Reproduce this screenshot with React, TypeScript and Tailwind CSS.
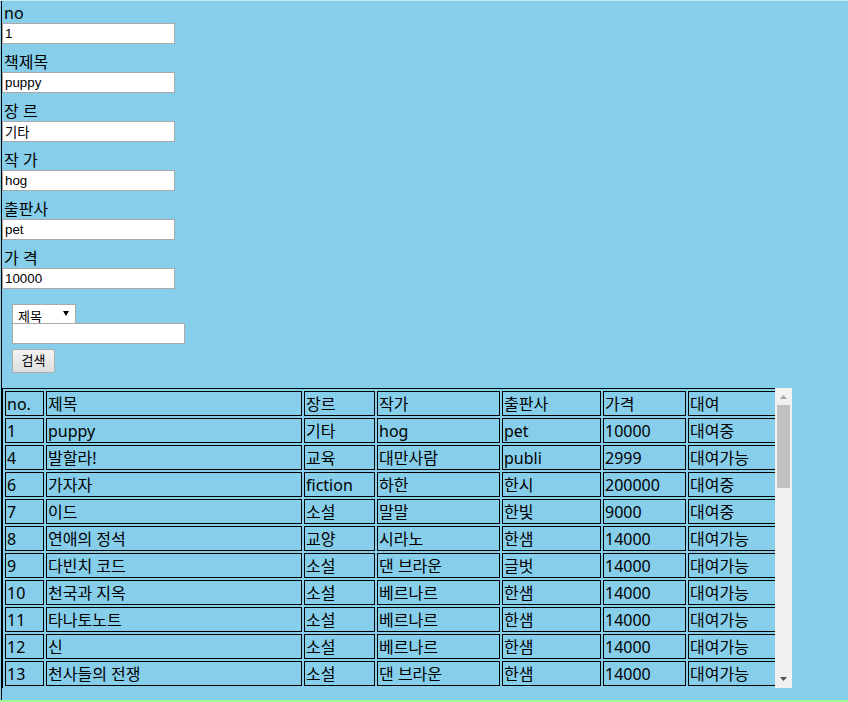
import React from "react";

const fields = [
  { label: "no", value: "1" },
  { label: "책제목", value: "puppy" },
  { label: "장 르", value: "기타" },
  { label: "작 가", value: "hog" },
  { label: "출판사", value: "pet" },
  { label: "가 격", value: "10000" },
];

const books = [
  ["1", "puppy", "기타", "hog", "pet", "10000", "대여중"],
  ["4", "발할라!", "교육", "대만사람", "publi", "2999", "대여가능"],
  ["6", "가자자", "fiction", "하한", "한시", "200000", "대여중"],
  ["7", "이드", "소설", "말말", "한빛", "9000", "대여중"],
  ["8", "연애의 정석", "교양", "시라노", "한샘", "14000", "대여가능"],
  ["9", "다빈치 코드", "소설", "댄 브라운", "글벗", "14000", "대여가능"],
  ["10", "천국과 지옥", "소설", "베르나르", "한샘", "14000", "대여가능"],
  ["11", "타나토노트", "소설", "베르나르", "한샘", "14000", "대여가능"],
  ["12", "신", "소설", "베르나르", "한샘", "14000", "대여가능"],
  ["13", "천사들의 전쟁", "소설", "댄 브라운", "한샘", "14000", "대여가능"],
];

const headers = ["no.", "제목", "장르", "작가", "출판사", "가격", "대여"];
const widths = ["w-[39px]", "w-[256px]", "w-[71px]", "w-[123px]", "w-[99px]", "w-[83px]", "w-[100px]"];

const cell = "border border-black px-[1px] pt-[2px] pb-0 leading-[21px] h-[25px] font-normal text-left whitespace-nowrap overflow-hidden";

export default function App() {
  return (
    <div className="w-[848px] h-[702px] bg-[#87ceeb] flex flex-col text-black font-['Noto_Sans','Noto_Sans_CJK_KR',sans-serif]">
      <div className="h-px bg-[#c6e6f4]" />
      <div className="flex-1 flex">
        <div className="w-px" />
        <div className="w-px bg-black" />
        <div className="flex-1 flex flex-col pt-[2px]">
          {fields.map((f) => (
            <div key={f.label} className="mb-[8px]">
              <div className="h-[20px] leading-[20px] text-[16px] pl-[2px]">{f.label}</div>
              <input
                readOnly
                defaultValue={f.value}
                className="block w-[173px] h-[21px] px-[2px] bg-white border border-[#a9a9a9] text-[13.33px] font-['Liberation_Sans','Noto_Sans_CJK_KR',sans-serif] outline-none"
              />
            </div>
          ))}

          <div className="ml-[10px] mt-[7px] flex flex-col items-start">
            <div className="w-[64px] h-[19px] bg-white border border-b-0 border-[#a9a9a9] flex justify-between pl-[5px] pr-[6px] pt-[4px] text-[13px] leading-[15px] font-['Liberation_Sans','Noto_Sans_CJK_KR',sans-serif]">
              <span>제목</span>
              <svg width="6" height="5" viewBox="0 0 6 5" className="mt-[2px]">
                <path d="M0 0H6L3 5Z" fill="#000" />
              </svg>
            </div>
            <input
              readOnly
              className="block w-[173px] h-[21px] px-[2px] bg-white border border-[#a9a9a9] text-[13.33px] outline-none"
            />
            <button className="block mt-[5px] w-[43px] h-[24px] border border-[#adadad] rounded-[2px] bg-gradient-to-b from-[#f4f4f4] to-[#dedede] text-[13px] leading-[20px] font-['Liberation_Sans','Noto_Sans_CJK_KR',sans-serif]">
              검색
            </button>
          </div>

          <div className="mt-[15px] h-[300px] w-[790px] flex">
            <div className="w-[773px] h-full overflow-hidden">
              <table className="table-fixed w-[788px] border-separate border-spacing-[2px] border border-black text-[16px]">
                <thead>
                  <tr>
                    {headers.map((h, i) => (
                      <th key={h} className={`${cell} ${widths[i]}`}>
                        {h}
                      </th>
                    ))}
                  </tr>
                </thead>
                <tbody>
                  {books.map((b) => (
                    <tr key={b[0]}>
                      {b.map((v, i) => (
                        <td key={i} className={cell}>
                          {v}
                        </td>
                      ))}
                    </tr>
                  ))}
                </tbody>
              </table>
            </div>
            <div className="w-[17px] h-full bg-[#f1f1f1] flex flex-col">
              <div className="h-[17px] flex justify-center pt-[7px]">
                <svg width="7" height="4" viewBox="0 0 7 4">
                  <path d="M3.5 0L7 4H0Z" fill="#a3a3a3" />
                </svg>
              </div>
              <div className="mx-[2px] h-[83px] bg-[#c1c1c1]" />
              <div className="flex-1" />
              <div className="h-[17px] flex justify-center pt-[6px]">
                <svg width="7" height="4" viewBox="0 0 7 4">
                  <path d="M0 0H7L3.5 4Z" fill="#505050" />
                </svg>
              </div>
            </div>
          </div>
        </div>
      </div>
      <div className="h-[2px] bg-[#98fb98]" />
    </div>
  );
}
